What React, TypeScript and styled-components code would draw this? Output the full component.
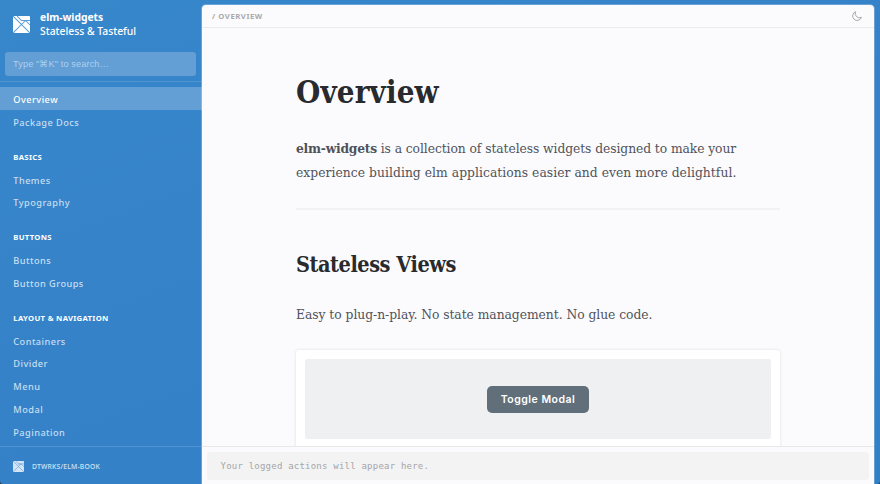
import React from 'react';
import styled, { createGlobalStyle } from 'styled-components';

const sans = '"Noto Sans", "Liberation Sans", sans-serif';
const serif = '"DejaVu Serif Condensed", "DejaVu Serif", serif';

const GlobalStyle = createGlobalStyle`
  *, *::before, *::after { box-sizing: border-box; }
  body { margin: 0; background: #26323d; font-family: ${sans}; overflow: hidden; }
  h1, h2, p { margin: 0; }
`;

const Shell = styled.div`
  display: grid;
  grid-template-columns: 202px 672px;
  width: 880px;
  height: 484px;
  overflow: hidden;
  border-radius: 0 0 3px 3px;
  background: linear-gradient(160deg, #3787cb 0%, #3682c8 45%, #3180c6 100%);
`;

const Sidebar = styled.aside`
  display: flex;
  flex-direction: column;
  height: 484px;
  min-width: 0;
`;

const Brand = styled.header`
  display: flex;
  align-items: center;
  gap: 10px;
  height: 52px;
  padding: 0 0 4px 13px;
  color: #fff;
`;

const BrandText = styled.div`
  font-size: 10.35px;
  font-weight: 500;
  line-height: 14px;
  white-space: nowrap;
`;

const BrandName = styled.div`
  font-weight: 700;
  letter-spacing: -0.03px;
`;

const SearchArea = styled.div`
  height: 30px;
  padding: 0 6px 0 5px;
  border-bottom: 1px solid #5093d1;
`;

const SearchInput = styled.input`
  display: block;
  width: 100%;
  height: 24px;
  padding: 0 8px;
  border: 0;
  border-radius: 3px;
  background: #639ed5;
  color: #fff;
  font: 9.2px "Liberation Sans", Arial, sans-serif;
  letter-spacing: 0.11px;
  outline: none;
  &::placeholder { color: #add0ee; opacity: 1; }
`;

const Nav = styled.nav`
  flex: 1;
  min-height: 0;
  padding-top: 5px;
  overflow: hidden;
`;

const NavGroup = styled.section`
  & + & { margin-top: 11.7px; }
`;

const NavHeading = styled.div`
  height: 22.95px;
  padding-left: 13.3px;
  color: #fff;
  font-size: 7.7px;
  font-weight: 700;
  letter-spacing: 0.32px;
  line-height: 24px;
`;

const NavLink = styled.a<{ $active?: boolean }>`
  display: block;
  height: 22.95px;
  padding-left: 13.3px;
  background: ${p => (p.$active ? '#639ed5' : 'transparent')};
  color: ${p => (p.$active ? '#fff' : '#c6def2')};
  font-size: 9.2px;
  font-weight: 500;
  letter-spacing: 0.46px;
  line-height: 25px;
  text-decoration: none;
`;

const SidebarFooter = styled.footer`
  display: flex;
  align-items: center;
  gap: 8px;
  height: 38px;
  padding: 2px 0 0 13px;
  border-top: 1px solid #5093d1;
  color: #cfe2f4;
  font-size: 6.75px;
  font-weight: 500;
  letter-spacing: 0.22px;
`;

const Main = styled.main`
  display: flex;
  flex-direction: column;
  height: 479px;
  margin-top: 5px;
  border-radius: 4px 4px 0 0;
  background: #fbfbfd;
  box-shadow: 0 0 0 1px rgba(255, 255, 255, 0.25);
  overflow: hidden;
`;

const TopBar = styled.header`
  display: flex;
  flex: none;
  align-items: center;
  justify-content: space-between;
  height: 23px;
  padding: 0 12px 0 10px;
  border-bottom: 1px solid #ebebee;
  color: #a9a9ab;
  font-size: 7.7px;
  font-weight: 700;
  letter-spacing: 0.55px;
`;

const Content = styled.article`
  flex: 1;
  min-height: 0;
  padding: 40px 94px 0;
  overflow: hidden;
`;

const Title = styled.h1`
  color: #292a2d;
  font: 700 31px/48px ${serif};
  letter-spacing: 0.15px;
`;

const Paragraph = styled.p<{ $top: number }>`
  margin-top: ${p => p.$top}px;
  color: #50525a;
  font: 400 13.7px/24px ${serif};
  white-space: nowrap;
`;

const Line = styled.span<{ $tracking: number }>`
  display: block;
  letter-spacing: ${p => p.$tracking}px;
`;

const Strong = styled.strong`
  letter-spacing: -0.25px;
`;

const Rule = styled.hr`
  height: 2px;
  margin: 24px 0 0;
  border: 0;
  background: #f1f1f4;
`;

const Subtitle = styled.h2`
  margin-top: 36px;
  color: #292a2d;
  font: 700 21.5px/38px ${serif};
  letter-spacing: -0.45px;
`;

const Card = styled.div`
  height: 130px;
  margin-top: 24px;
  padding: 9px;
  border-radius: 3px;
  background: #fff;
  box-shadow: 0 0 3px rgba(20, 25, 40, 0.14);
`;

const Stage = styled.div`
  display: flex;
  align-items: center;
  justify-content: center;
  height: 80px;
  border-radius: 2px;
  background: #eff0f2;
`;

const Button = styled.button`
  width: 102px;
  height: 27px;
  padding: 0;
  border: 0;
  border-radius: 5px;
  background: #616f7b;
  color: #fff;
  font: 600 10.5px Inter, sans-serif;
  letter-spacing: 0.5px;
`;

const LogBar = styled.footer`
  flex: none;
  height: 38px;
  padding: 5px 5px 4px;
  border-top: 1px solid #e8e8eb;
`;

const LogMessage = styled.div`
  height: 28px;
  padding-left: 13.5px;
  border-radius: 3px;
  background: #f3f3f3;
  color: #a5a5a8;
  font: 9px/29px "DejaVu Sans Mono", monospace;
  letter-spacing: 0.22px;
`;

const Logo = ({ size, color, line }: { size: number; color: string; line: string }) => (
  <svg width={size} height={size} viewBox="0 0 17 17" fill="none">
    <rect width="17" height="17" rx="0.8" fill={color} />
    <path d="M0 0 17 17M0 17 12.5 4.5M4 0l4.5 4.5h8.5M8.5 4.5h4L17 9" stroke={line} strokeWidth="1.05" />
  </svg>
);

const Moon = () => (
  <svg width="10" height="10" viewBox="0 0 20 20" fill="none" stroke="#a0a0a4" strokeWidth="1.8" strokeLinejoin="round">
    <path d="M7.2 1.4A9 9 0 1 0 18.8 12.7 8.6 8.6 0 0 1 7.2 1.4Z" />
  </svg>
);

const groups = [
  { items: ['Overview', 'Package Docs'] },
  { title: 'BASICS', items: ['Themes', 'Typography'] },
  { title: 'BUTTONS', items: ['Buttons', 'Button Groups'] },
  { title: 'LAYOUT & NAVIGATION', items: ['Containers', 'Divider', 'Menu', 'Modal', 'Pagination'] },
];

export default function App() {
  return (
    <>
      <GlobalStyle />
      <Shell>
        <Sidebar>
          <Brand>
            <Logo size={17} color="#fff" line="#5e9dd6" />
            <BrandText>
              <BrandName>elm-widgets</BrandName>
              Stateless &amp; Tasteful
            </BrandText>
          </Brand>
          <SearchArea>
            <SearchInput placeholder={'Type "⌘K" to search…'} />
          </SearchArea>
          <Nav>
            {groups.map((group, i) => (
              <NavGroup key={i}>
                {group.title && <NavHeading>{group.title}</NavHeading>}
                {group.items.map(item => (
                  <NavLink key={item} $active={item === 'Overview'}>{item}</NavLink>
                ))}
              </NavGroup>
            ))}
          </Nav>
          <SidebarFooter>
            <Logo size={11} color="#d3e4f4" line="#6ba4d8" />
            DTWRKS/ELM-BOOK
          </SidebarFooter>
        </Sidebar>
        <Main>
          <TopBar>
            / OVERVIEW
            <Moon />
          </TopBar>
          <Content>
            <Title>Overview</Title>
            <Paragraph $top={20}>
              <Line $tracking={-0.07}>
                <Strong>elm-widgets</Strong> is a collection of stateless widgets designed to make your
              </Line>
              <Line $tracking={0.05}>
                experience building elm applications easier and even more delightful.
              </Line>
            </Paragraph>
            <Rule />
            <Subtitle>Stateless Views</Subtitle>
            <Paragraph $top={18}>
              <Line $tracking={-0.03}>Easy to plug-n-play. No state management. No glue code.</Line>
            </Paragraph>
            <Card>
              <Stage>
                <Button>Toggle Modal</Button>
              </Stage>
            </Card>
          </Content>
          <LogBar>
            <LogMessage>Your logged actions will appear here.</LogMessage>
          </LogBar>
        </Main>
      </Shell>
    </>
  );
}
